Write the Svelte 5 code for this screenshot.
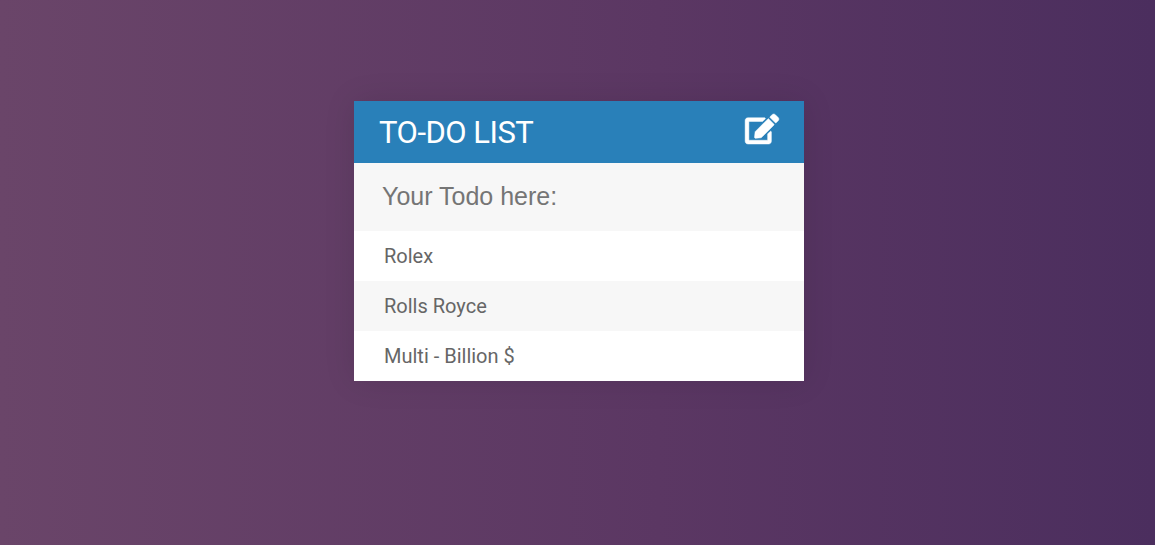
<script>
  let todos = $state(['Rolex', 'Rolls Royce', 'Multi - Billion $']);
  let draft = $state('');
  let open = $state(true);

  function add(event) {
    if (event.key === 'Enter' && draft.trim()) {
      todos.push(draft.trim());
      draft = '';
    }
  }
</script>

<main>
  <section class="card">
    <header>
      <h1>TO-DO LIST</h1>
      <button aria-label="Toggle input" onclick={() => (open = !open)}>
        <svg viewBox="0 0 576 512" fill="currentColor" stroke="currentColor" stroke-width="8">
          <path d="M402.6 83.2l90.2 90.2c3.8 3.8 3.8 10 0 13.8L274.4 405.6l-92.8 10.3c-12.4 1.4-22.9-9.1-21.5-21.5l10.3-92.8L388.8 83.2c3.8-3.8 10-3.8 13.8 0zm162-22.9l-48.8-48.8c-15.2-15.2-39.9-15.2-55.2 0l-35.4 35.4c-3.8 3.8-3.8 10 0 13.8l90.2 90.2c3.8 3.8 10 3.8 13.8 0l35.4-35.4c15.2-15.3 15.2-40 0-55.2zM384 346.2V448H64V128h229.8c3.2 0 6.2-1.3 8.5-3.5l40-40c7.6-7.6 2.2-20.5-8.5-20.5H48C21.500 64 0 85.500 0 112v352c0 26.500 21.500 48 48 48h352c26.500 0 48-21.500 48-48V306.200c0-10.700-12.900-16-20.500-8.500l-40 40c-2.200 2.300-3.500 5.300-3.500 8.500z" />
        </svg>
      </button>
    </header>
    {#if open}
      <input type="text" placeholder="Your Todo here:" bind:value={draft} onkeydown={add} />
    {/if}
    <ul>
      {#each todos as todo}
        <li>{todo}</li>
      {/each}
    </ul>
  </section>
</main>

<style>
  :global(body) {
    margin: 0;
  }

  main {
    box-sizing: border-box;
    min-height: 100vh;
    padding-top: 101px;
    padding-left: 354px;
    background: linear-gradient(to right, #6a4569 0%, #5b3763 57%, #4b2e5e 100%);
    font-family: Roboto, sans-serif;
  }

  .card {
    width: 450px;
    background: #f7f7f7;
    box-shadow: 0 0 30px rgba(0, 0, 0, 0.1);
  }

  header {
    display: flex;
    justify-content: space-between;
    box-sizing: border-box;
    height: 62px;
    padding: 13px 25px 0;
    background: #2980b9;
    color: #fff;
  }

  h1 {
    margin: 0;
    font-size: 31px;
    font-weight: 400;
    letter-spacing: -0.5px;
    line-height: 37px;
  }

  button {
    width: 34px;
    height: 30px;
    padding: 0;
    border: 0;
    background: none;
    color: inherit;
    cursor: pointer;
  }

  svg {
    display: block;
    width: 34px;
    height: 30px;
    overflow: visible;
  }

  input {
    display: block;
    box-sizing: border-box;
    width: 100%;
    height: 68px;
    padding: 0 28px 2px;
    border: 0;
    outline: none;
    background: #f7f7f7;
    color: #666;
    font: 400 25px "Liberation Sans", Arial, sans-serif;
  }

  input::placeholder {
    color: #757575;
  }

  ul {
    margin: 0;
    padding: 0;
    list-style: none;
  }

  li {
    height: 50px;
    padding-left: 30px;
    background: #fff;
    color: #666;
    font-size: 20px;
    line-height: 50px;
  }

  li:nth-child(2n) {
    background: #f7f7f7;
  }
</style>
